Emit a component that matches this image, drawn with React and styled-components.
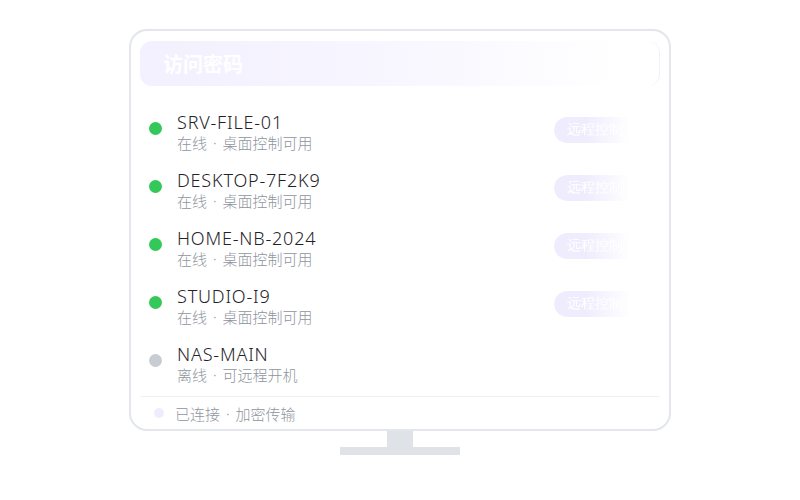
import React from 'react';
import styled, { createGlobalStyle } from 'styled-components';

const GlobalStyle = createGlobalStyle`
  body {
    margin: 0;
    background: #ffffff;
    font-family: "Noto Sans", "Noto Sans CJK SC", sans-serif;
  }
`;

// Список устройств
const devices = [
  { id: 1, name: 'SRV-FILE-01', status: '在线 · 桌面控制可用', online: true },
  { id: 2, name: 'DESKTOP-7F2K9', status: '在线 · 桌面控制可用', online: true },
  { id: 3, name: 'HOME-NB-2024', status: '在线 · 桌面控制可用', online: true },
  { id: 4, name: 'STUDIO-I9', status: '在线 · 桌面控制可用', online: true },
  { id: 5, name: 'NAS-MAIN', status: '离线 · 可远程开机', online: false },
];

const Page = styled.div`
  width: 800px;
  height: 500px;
  display: flex;
  flex-direction: column;
  align-items: center;
  padding-top: 29px;
  box-sizing: border-box;
`;

const Monitor = styled.div`
  width: 542px;
  height: 402px;
  box-sizing: border-box;
  border: 2px solid #e3e6ea;
  border-radius: 18px;
  background: #fff;
  padding: 10px 9px 0;
  display: flex;
  flex-direction: column;
`;

const Header = styled.div`
  height: 45px;
  border-radius: 12px;
  background: linear-gradient(90deg, #f3f0ff 0%, #f8f6ff 50%, #ffffff 92%);
  border-right: 1px solid #f0f1f4;
  display: flex;
  align-items: center;
  padding-left: 23px;
  color: #ffffff;
  font-size: 20px;
  font-weight: 700;
  font-family: "Noto Sans CJK SC", sans-serif;
`;

const List = styled.div`
  margin-top: 17px;
  display: flex;
  flex-direction: column;
`;

const Row = styled.div`
  height: 58px;
  display: flex;
  align-items: center;
  justify-content: space-between;
`;

const Info = styled.div`
  display: flex;
  align-items: flex-start;
  padding-left: 9px;
`;

const Dot = styled.span`
  width: 13px;
  height: 13px;
  border-radius: 50%;
  margin-top: 11px;
  margin-right: 15px;
  background: ${(p) => (p.$online ? '#34c759' : '#c8ccd3')};
`;

const Texts = styled.div`
  display: flex;
  flex-direction: column;
`;

const Name = styled.div`
  font-size: 18px;
  font-weight: 300;
  line-height: 22px;
  color: #1f2329;
  letter-spacing: 0.8px;
`;

const Status = styled.div`
  font-size: 15px;
  font-weight: 300;
  line-height: 21px;
  word-spacing: 2px;
  color: #8f959e;
`;

const RemoteButton = styled.div`
  width: 106px;
  height: 26px;
  border-radius: 13px;
  margin-top: -4px;
  box-sizing: border-box;
  padding-left: 13px;
  display: flex;
  align-items: center;
  background: #efecfd;
  color: #ffffff;
  font-size: 14px;
  font-family: serif;
  -webkit-mask-image: linear-gradient(90deg, #000 30%, transparent 72%);
  mask-image: linear-gradient(90deg, #000 30%, transparent 72%);
`;

const Divider = styled.div`
  margin-top: 3px;
  height: 1px;
  background: #eef0f3;
`;

const Footer = styled.div`
  flex: 1;
  display: flex;
  align-items: center;
  padding-left: 14px;
  gap: 11px;
  font-size: 15px;
  font-weight: 300;
  word-spacing: 2px;
  color: #8f959e;
`;

const FooterDot = styled.span`
  width: 10px;
  height: 10px;
  border-radius: 50%;
  background: #efedfd;
`;

const Neck = styled.div`
  width: 26px;
  height: 16px;
  background: #dfe3e8;
`;

const Base = styled.div`
  width: 120px;
  height: 8px;
  background: #dfe3e8;
`;

const App = () => {
  return (
    <>
      <GlobalStyle />
      <Page>
        <Monitor>
          <Header>访问密码</Header>
          <List>
            {devices.map((d) => (
              <Row key={d.id}>
                <Info>
                  <Dot $online={d.online} />
                  <Texts>
                    <Name>{d.name}</Name>
                    <Status>{d.status}</Status>
                  </Texts>
                </Info>
                {d.online && <RemoteButton>远程控制</RemoteButton>}
              </Row>
            ))}
          </List>
          <Divider />
          <Footer>
            <FooterDot />
            已连接 · 加密传输
          </Footer>
        </Monitor>
        <Neck />
        <Base />
      </Page>
    </>
  );
};

export default App;
